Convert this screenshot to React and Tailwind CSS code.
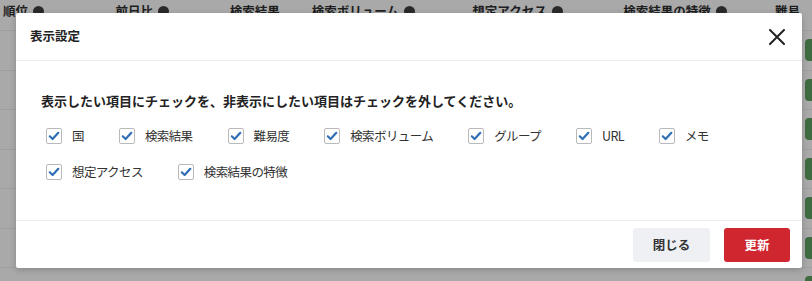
import React from "react";

const font = { fontFamily: '"Noto Sans CJK JP", "Noto Sans", sans-serif' };

function Q() {
  return <span className="inline-block w-[11px] h-[11px] rounded-full bg-[#2a2a2a] ml-[5px] align-middle" />;
}

function Check() {
  return (
    <span className="w-[16px] h-[16px] border border-[#b9b9b9] rounded-[2px] bg-white flex items-center justify-center shrink-0">
      <svg width="12" height="12" viewBox="0 0 12 12">
        <path d="M1.8 6.3 L4.6 9 L10.3 2.8" fill="none" stroke="#2f6eb5" strokeWidth="2.2" strokeLinecap="round" strokeLinejoin="round" />
      </svg>
    </span>
  );
}

function Item({ label }) {
  return (
    <div className="flex items-center gap-[10px] shrink-0">
      <Check />
      <span className="text-[12.5px] leading-[18px] text-[#333] tracking-[-0.6px] whitespace-nowrap">{label}</span>
    </div>
  );
}

export default function App() {
  const rows = [0, 1, 2, 3, 4, 5, 6];
  const row1 = ["国", "検索結果", "難易度", "検索ボリューム", "グループ", "URL", "メモ"];
  const row2 = ["想定アクセス", "検索結果の特徴"];
  return (
    <div className="relative w-[812px] h-[281px] overflow-hidden bg-[#a9a9a9]" style={font}>
      {/* background table (dimmed) */}
      <div className="flex flex-col">
        <div className="h-[31px] flex items-start pt-[3px] text-[12.5px] font-bold text-[#1e1e1e] leading-[16px] border-b border-[#9f9f9f]">
          <div className="w-[114px] pl-[3px] flex items-center">順位<Q /></div>
          <div className="w-[116px] pl-[3px] flex items-center">前日比<Q /></div>
          <div className="w-[83px] pl-[3px] flex items-center">検索結果</div>
          <div className="w-[163px] pl-[3px] flex items-center">検索ボリューム<Q /></div>
          <div className="w-[153px] pl-[3px] flex items-center">想定アクセス<Q /></div>
          <div className="w-[154px] pl-[3px] flex items-center">検索結果の特徴<Q /></div>
          <div className="pl-[3px] flex items-center">難易度</div>
        </div>
        {rows.map((r) => (
          <div key={r} className="h-[39.5px] flex items-center justify-end border-b border-[#9f9f9f]">
            <div className="w-[14px] h-[22px] rounded-[4px] bg-[#3f6b40] mr-[-7px]" />
          </div>
        ))}
      </div>

      {/* modal */}
      <div className="absolute left-[16px] top-[13px] w-[786px] h-[255px] bg-white rounded-[2px] shadow-[0_2px_6px_rgba(0,0,0,0.2)] flex flex-col">
        <div className="h-[48px] shrink-0 flex items-center justify-between pl-[14px] pr-[17px] border-b border-[#ebebeb]">
          <span className="text-[12.5px] font-bold text-[#222]">表示設定</span>
          <svg width="16" height="16" viewBox="0 0 16 16">
            <path d="M1 1 L15 15 M15 1 L1 15" stroke="#222" strokeWidth="2" strokeLinecap="round" />
          </svg>
        </div>
        <div className="flex-1 pl-[25px] pt-[30px]">
          <p className="text-[13px] leading-[19px] font-bold text-[#222]">
            表示したい項目にチェックを、非表示にしたい項目はチェックを外してください。
          </p>
          <div className="pl-[5px] mt-[17px] flex flex-col gap-y-[18px]">
            <div className="flex gap-x-[35px]">
              {row1.map((it) => (
                <Item key={it} label={it} />
              ))}
            </div>
            <div className="flex gap-x-[35px]">
              {row2.map((it) => (
                <Item key={it} label={it} />
              ))}
            </div>
          </div>
        </div>
        <div className="h-[48px] shrink-0 border-t border-[#ebebeb] flex items-start justify-end gap-[14px] pt-[7px] pr-[12px]">
          <button className="w-[77px] h-[34px] rounded-[3px] bg-[#eef0f3] text-[12.5px] font-bold text-[#333]">閉じる</button>
          <button className="w-[66px] h-[34px] rounded-[3px] bg-[#d0262f] text-[12.5px] font-bold text-white">更新</button>
        </div>
      </div>
    </div>
  );
}
